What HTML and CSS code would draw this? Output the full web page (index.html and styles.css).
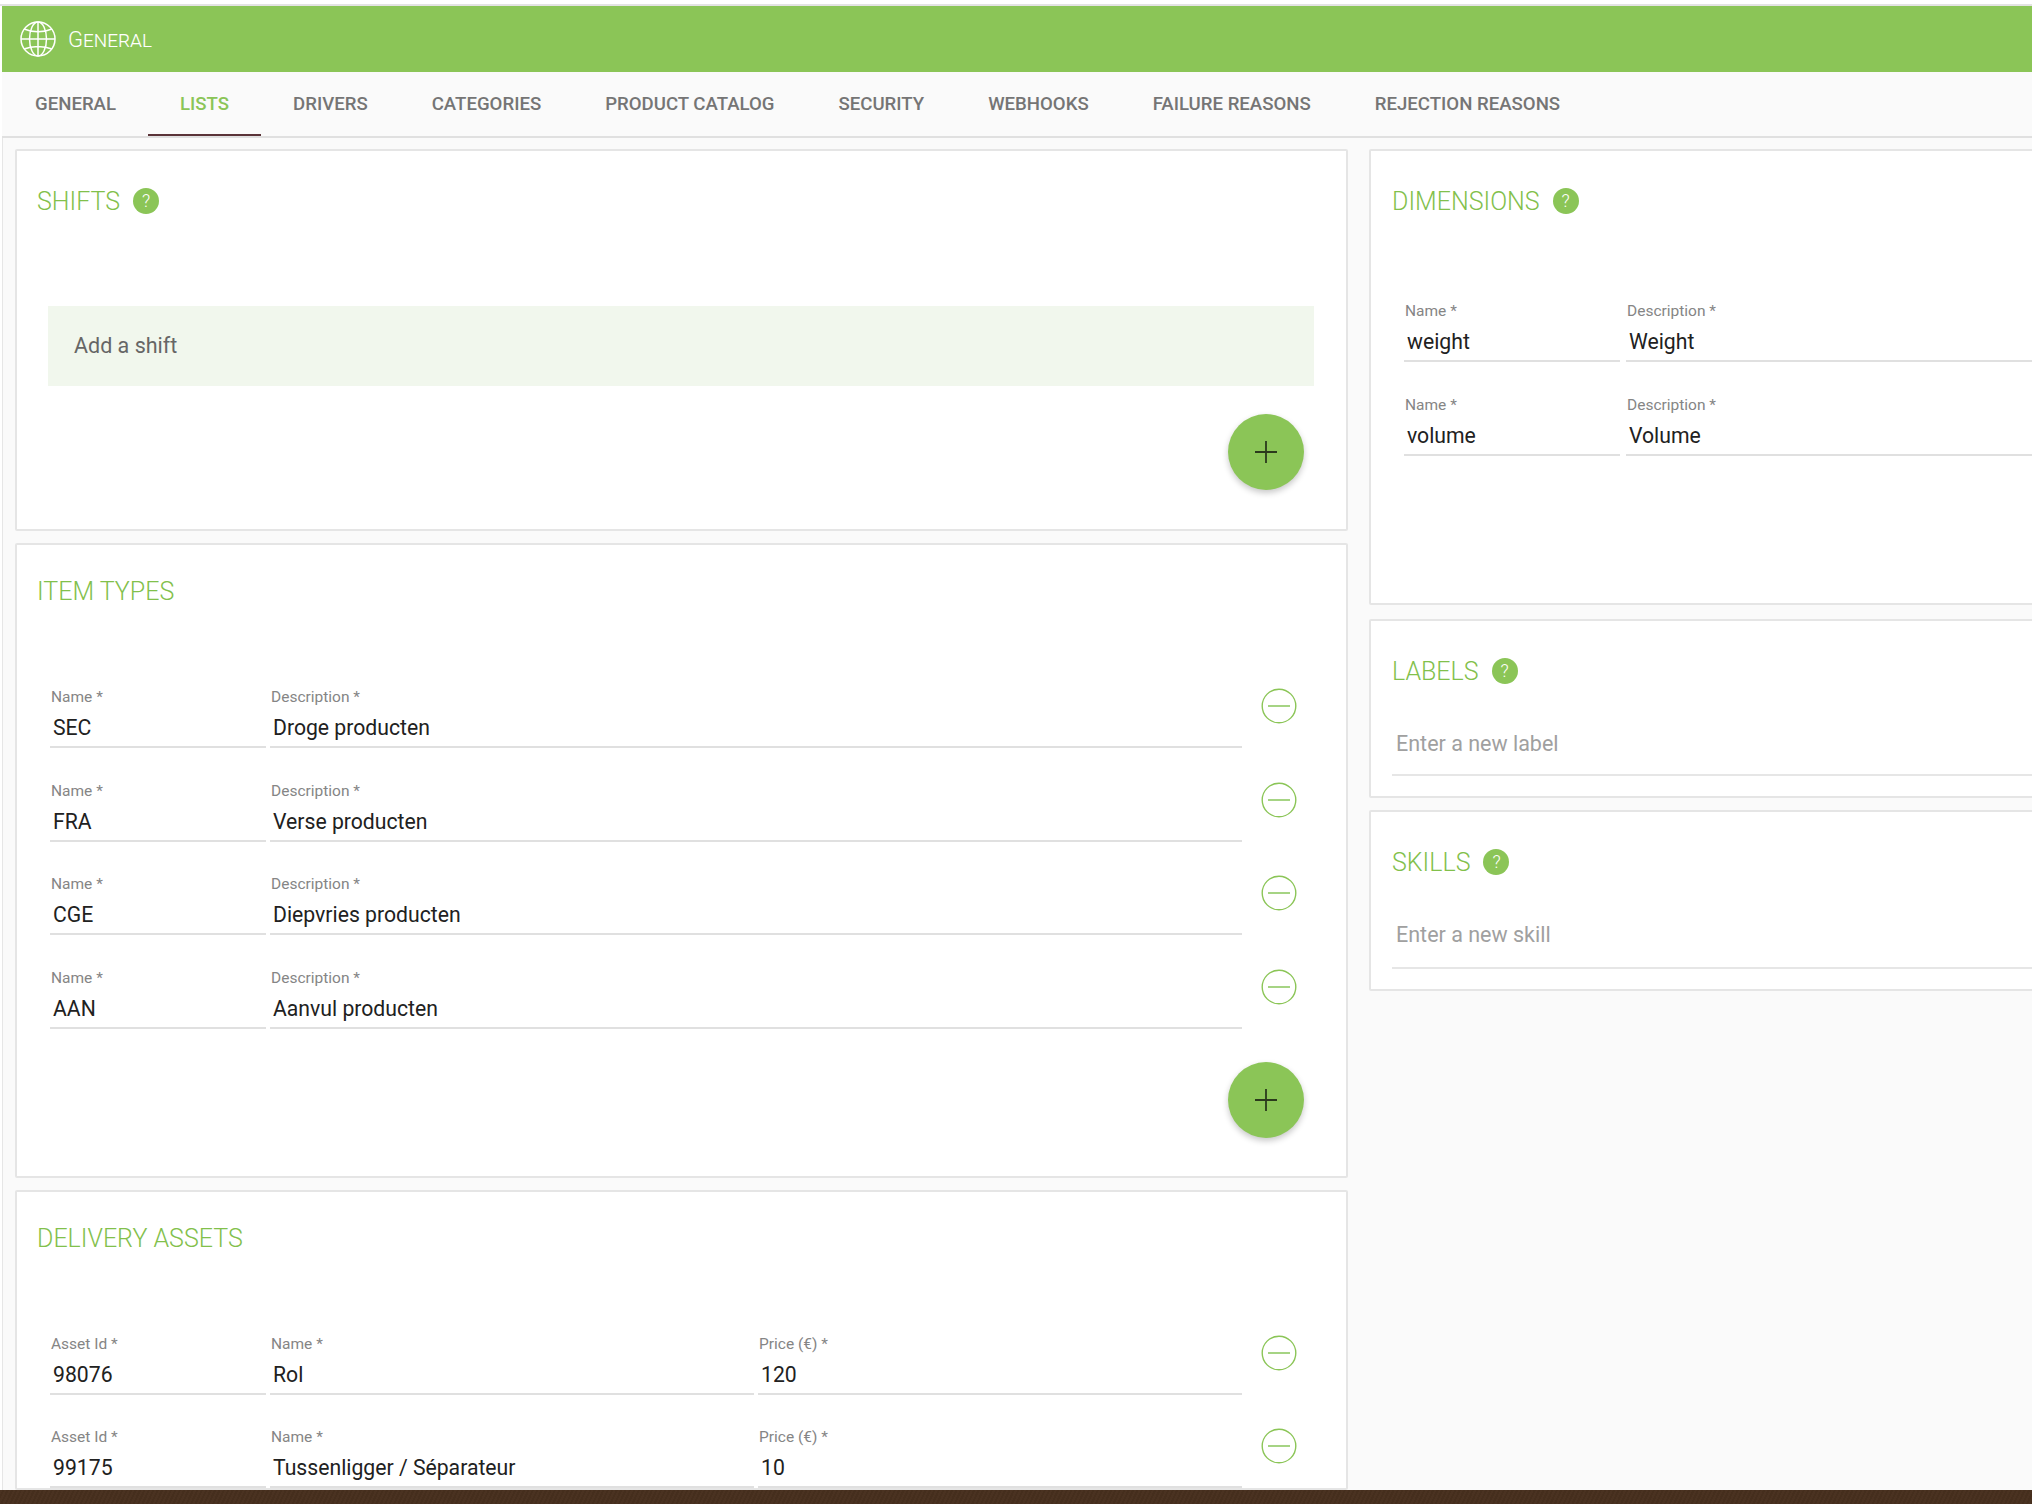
FILE: index.html
```html
<!DOCTYPE html>
<html lang="en">
<head>
	<meta charset="UTF-8">
	<title>General</title>
	<link rel="stylesheet" href="styles.css">
</head>
<body>
	<div class="page">
		<div class="topLine"></div>
		<header class="titleBar">
			<svg class="globe" viewBox="0 0 36 36" width="36" height="36" fill="none" stroke="#fff" stroke-width="1.5">
				<circle cx="18" cy="18" r="17"/>
				<ellipse cx="18" cy="18" rx="8.5" ry="17"/>
				<path d="M18 1V35M1 18H35M4 8C12 11.5 24 11.5 32 8M4 28C12 24.5 24 24.5 32 28"/>
			</svg>
			<span class="titleText">General</span>
		</header>
		<nav class="tabs">
			<a href="#" class="tab">General</a>
			<a href="#" class="tab active">Lists</a>
			<a href="#" class="tab">Drivers</a>
			<a href="#" class="tab">Categories</a>
			<a href="#" class="tab">Product Catalog</a>
			<a href="#" class="tab">Security</a>
			<a href="#" class="tab">Webhooks</a>
			<a href="#" class="tab">Failure Reasons</a>
			<a href="#" class="tab">Rejection Reasons</a>
		</nav>
		<main class="content">
			<div class="column leftColumn">
				<section class="card">
					<div class="cardHead withHelp">
						<h2 class="cardTitle">Shifts</h2>
						<span class="help">?</span>
					</div>
					<div class="addBox">Add a shift</div>
					<div class="fabRow">
						<button class="fab">
							<svg viewBox="0 0 22 22" width="22" height="22" stroke="#2b3a1c" stroke-width="1.8"><path d="M11 0V22M0 11H22"/></svg>
						</button>
					</div>
				</section>

				<section class="card">
					<div class="cardHead">
						<h2 class="cardTitle">Item Types</h2>
					</div>
					<div class="rows">
						<div class="row">
							<div class="field small"><label>Name *</label><div class="value">SEC</div></div>
							<div class="field"><label>Description *</label><div class="value">Droge producten</div></div>
							<svg class="remove" viewBox="0 0 36 36" width="36" height="36" fill="none"><circle cx="18" cy="18" r="16.8" stroke="#8bc557" stroke-width="1.4"/><path d="M7 18H29" stroke="#a6d484" stroke-width="2"/></svg>
						</div>
						<div class="row">
							<div class="field small"><label>Name *</label><div class="value">FRA</div></div>
							<div class="field"><label>Description *</label><div class="value">Verse producten</div></div>
							<svg class="remove" viewBox="0 0 36 36" width="36" height="36" fill="none"><circle cx="18" cy="18" r="16.8" stroke="#8bc557" stroke-width="1.4"/><path d="M7 18H29" stroke="#a6d484" stroke-width="2"/></svg>
						</div>
						<div class="row">
							<div class="field small"><label>Name *</label><div class="value">CGE</div></div>
							<div class="field"><label>Description *</label><div class="value">Diepvries producten</div></div>
							<svg class="remove" viewBox="0 0 36 36" width="36" height="36" fill="none"><circle cx="18" cy="18" r="16.8" stroke="#8bc557" stroke-width="1.4"/><path d="M7 18H29" stroke="#a6d484" stroke-width="2"/></svg>
						</div>
						<div class="row">
							<div class="field small"><label>Name *</label><div class="value">AAN</div></div>
							<div class="field"><label>Description *</label><div class="value">Aanvul producten</div></div>
							<svg class="remove" viewBox="0 0 36 36" width="36" height="36" fill="none"><circle cx="18" cy="18" r="16.8" stroke="#8bc557" stroke-width="1.4"/><path d="M7 18H29" stroke="#a6d484" stroke-width="2"/></svg>
						</div>
					</div>
					<div class="fabRow closeFab">
						<button class="fab">
							<svg viewBox="0 0 22 22" width="22" height="22" stroke="#2b3a1c" stroke-width="1.8"><path d="M11 0V22M0 11H22"/></svg>
						</button>
					</div>
				</section>

				<section class="card">
					<div class="cardHead">
						<h2 class="cardTitle">Delivery Assets</h2>
					</div>
					<div class="rows">
						<div class="row">
							<div class="field small"><label>Asset Id *</label><div class="value">98076</div></div>
							<div class="field half"><label>Name *</label><div class="value">Rol</div></div>
							<div class="field half"><label>Price (€) *</label><div class="value">120</div></div>
							<svg class="remove" viewBox="0 0 36 36" width="36" height="36" fill="none"><circle cx="18" cy="18" r="16.8" stroke="#8bc557" stroke-width="1.4"/><path d="M7 18H29" stroke="#a6d484" stroke-width="2"/></svg>
						</div>
						<div class="row">
							<div class="field small"><label>Asset Id *</label><div class="value">99175</div></div>
							<div class="field half"><label>Name *</label><div class="value">Tussenligger / Séparateur</div></div>
							<div class="field half"><label>Price (€) *</label><div class="value">10</div></div>
							<svg class="remove" viewBox="0 0 36 36" width="36" height="36" fill="none"><circle cx="18" cy="18" r="16.8" stroke="#8bc557" stroke-width="1.4"/><path d="M7 18H29" stroke="#a6d484" stroke-width="2"/></svg>
						</div>
					</div>
				</section>
			</div>

			<div class="column rightColumn">
				<section class="card dimensions">
					<div class="cardHead withHelp">
						<h2 class="cardTitle">Dimensions</h2>
						<span class="help">?</span>
					</div>
					<div class="rows dimRows">
						<div class="row">
							<div class="field small"><label>Name *</label><div class="value">weight</div></div>
							<div class="field"><label>Description *</label><div class="value">Weight</div></div>
						</div>
						<div class="row">
							<div class="field small"><label>Name *</label><div class="value">volume</div></div>
							<div class="field"><label>Description *</label><div class="value">Volume</div></div>
						</div>
					</div>
				</section>

				<section class="card">
					<div class="cardHead withHelp">
						<h2 class="cardTitle">Labels</h2>
						<span class="help">?</span>
					</div>
					<div class="tagInput">Enter a new label</div>
				</section>

				<section class="card">
					<div class="cardHead withHelp">
						<h2 class="cardTitle">Skills</h2>
						<span class="help">?</span>
					</div>
					<div class="tagInput skillInput">Enter a new skill</div>
				</section>
			</div>
		</main>
		<footer class="bottomStrip"></footer>
	</div>
</body>
</html>
```

FILE: styles.css
```css
* {
	padding: 0;
	margin: 0;
	box-sizing: border-box;
	text-decoration: none;
}
body {
	background: #fff;
	font-family: Roboto, "Liberation Sans", sans-serif;
	overflow: hidden;
}
.page {
	display: flex;
	flex-direction: column;
	width: 2032px;
	height: 1504px;
	overflow: hidden;
}
.topLine {
	height: 6px;
	border-bottom: 2px solid #e3e3e3;
}

/* green title bar */
.titleBar {
	display: flex;
	align-items: center;
	gap: 12px;
	height: 66px;
	margin-left: 2px;
	padding-left: 18px;
	background: #8bc557;
}
.titleText {
	color: #fff;
	font-size: 22px;
	font-weight: 300;
	font-variant: small-caps;
}

/* tabs */
.tabs {
	display: flex;
	height: 66px;
	margin-left: 2px;
	padding-left: 1px;
	background: #fafafa;
	border-bottom: 2px solid #e0e0e0;
}
.tab {
	height: 64px;
	padding: 0 32px;
	color: #757575;
	font-size: 18.62px;
	font-weight: 500;
	line-height: 64px;
	text-transform: uppercase;
}
.tab.active {
	color: #8bc557;
	border-bottom: 2px solid #5a3338;
}

/* page body */
.content {
	display: flex;
	flex: 1;
	gap: 21px;
	min-height: 0;
	margin-left: 2px;
	padding: 11px 0 0 12px;
	overflow: hidden;
	background: #fafafa;
	border-left: 1px solid #e6e6e6;
}
.column {
	display: flex;
	flex-direction: column;
	flex: none;
	gap: 12px;
}
.leftColumn {
	width: 1333px;
}
.rightColumn {
	width: 900px;
}
.card {
	flex: none;
	background: #fff;
	border: 2px solid #e5e5e5;
	border-radius: 2px;
}
.dimensions {
	height: 456px;
	margin-bottom: 2px;
}
.cardHead {
	display: flex;
	align-items: center;
	gap: 13px;
	height: 62px;
	padding: 30px 0 0 20px;
}
.rightColumn .cardHead {
	padding-left: 21px;
}
.cardHead.withHelp {
	height: 66px;
	padding-top: 34px;
}
.cardTitle {
	margin-top: 2px;
	color: #82c04b;
	font-size: 25px;
	font-weight: 300;
	line-height: 32px;
	text-transform: uppercase;
}
.help {
	flex: none;
	width: 26px;
	height: 26px;
	border-radius: 50%;
	background: #8bc557;
	color: #fff;
	font-size: 18px;
	font-weight: 300;
	line-height: 26px;
	text-align: center;
}

/* add a shift */
.addBox {
	height: 80px;
	margin: 89px 32px 0 31px;
	padding-left: 26px;
	background: #f1f7ed;
	color: #666;
	font-size: 21.5px;
	line-height: 79px;
}
.fabRow {
	display: flex;
	justify-content: flex-end;
	padding: 28px 42px 39px 0;
}
.closeFab {
	padding-top: 33px;
	padding-bottom: 38px;
}
.fab {
	display: flex;
	align-items: center;
	justify-content: center;
	width: 76px;
	height: 76px;
	border: none;
	border-radius: 50%;
	background: #8bc557;
	box-shadow: 0 3px 6px rgba(0, 0, 0, .22);
}

/* form rows */
.rows {
	display: flex;
	flex-direction: column;
	gap: 31.5px;
	margin-top: 79px;
	padding-left: 33px;
}
.dimRows {
	margin-top: 83px;
}
.row {
	display: flex;
	gap: 4px;
	width: 1192px;
	position: relative;
}
.field {
	flex: 1;
	min-width: 0;
	height: 62px;
	border-bottom: 2px solid #e0e0e0;
}
.field.small {
	flex: none;
	width: 216px;
}
.field label {
	display: block;
	height: 21px;
	margin: 0 0 1px 1px;
	color: #858585;
	font-size: 15.5px;
	line-height: 22px;
}
.value {
	padding-left: 3px;
	color: #212121;
	font-size: 21.2px;
	line-height: 39px;
}
.remove {
	flex: none;
	position: absolute;
	left: 1211px;
	top: 2px;
}
.dimRows .row {
	gap: 6px;
	width: 860px;
}
.tagInput {
	margin: 36px 0 20px 21px;
	padding: 0 0 10px 4px;
	color: #a0a0a0;
	font-size: 21.5px;
	line-height: 41px;
	border-bottom: 2px solid #e6e6e6;
}
.skillInput {
	padding-bottom: 12px;
}

.bottomStrip {
	flex: none;
	height: 14px;
	background: #47301f repeating-linear-gradient(115deg, #4a3221 0 2px, #452e1d 2px 4px);
}
```
